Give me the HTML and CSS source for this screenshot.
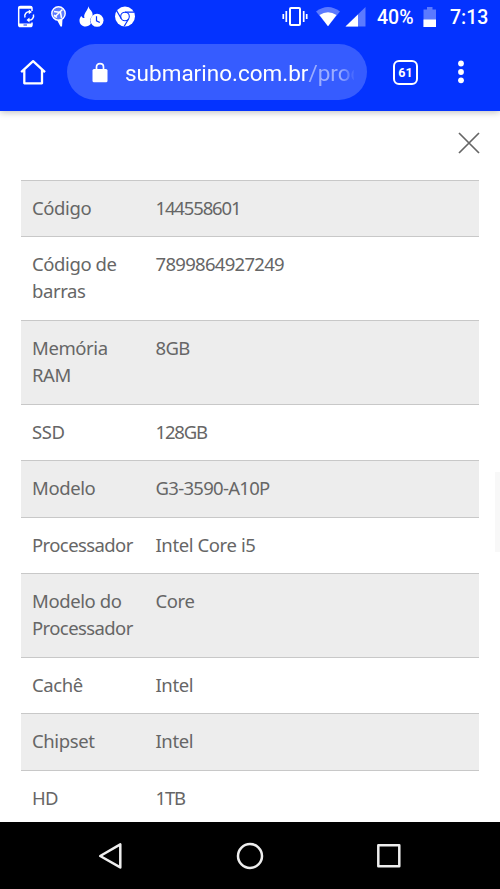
FILE: index.html
```html
<!DOCTYPE html>
<html lang="pt-BR">
<head>
<meta charset="utf-8">
<title>Submarino</title>
<link rel="stylesheet" href="styles.css">
</head>
<body>
<div class="phone">
  <header class="chrome">
    <div class="status">
      <svg class="status-left" width="140" height="36" viewBox="0 0 140 36" fill="none" stroke="#fff">
        <path d="M32 11V8.300Q32 6.500 30.200 6.500H20.500Q18.700 6.500 18.700 8.300V24.700Q18.700 26.500 20.500 26.500H30.200Q32 26.500 32 24.700V22.500" stroke-width="1.500"/>
        <path d="M18.700 7.500H32M18.700 24.800H32" stroke-width="2.400"/>
        <path d="M23.500 25H27" stroke="#0433ff" stroke-width="1"/>
        <path d="M25 17.500A4.300 4.300 0 0 1 30 11.800M33.400 14.500A4.300 4.300 0 0 1 28.500 20" stroke-width="1.500"/>
        <path d="M28.800 9.500L32 12L28.800 14.300ZM29.500 17.500L26.500 20L29.500 22.500Z" fill="#fff" stroke="none"/>
        <path d="M57 20L60.500 26.500L62 26.500L62.500 19.500Z" fill="#fff" stroke="none"/>
        <circle cx="58.500" cy="13.400" r="6.700" fill="#fff" fill-opacity=".35" stroke-width="1.400"/>
        <path d="M62.500 9.500L54.500 17.300M54 11.500L60.500 12.500L61.500 18M54 15L57 17.500" stroke-width="1.500"/>
        <path d="M88.500 6.300C89 10 93.500 11 92.500 16C90.300 17.500 89.700 20 90.800 23.800C89.500 25.700 87.500 26.500 85.500 26.500C82 26.500 79.500 24 79.500 20.500C79.500 18.500 80.300 17 81.500 16C82 17.800 83.500 18.300 84.500 18C83 14 87.500 11 88.500 6.300Z" fill="#fff" stroke="none"/>
        <circle cx="97" cy="20.300" r="6.500" fill="#fff" stroke="none"/>
        <path d="M96.500 16.300V20.800L99.800 22.500" stroke="#0433ff" stroke-width="1.200"/>
        <circle cx="125" cy="16.500" r="10" fill="#fff" stroke="none"/>
        <circle cx="125" cy="16.500" r="4.300" stroke="#0433ff" stroke-width="1.100"/>
        <path d="M125 12.200H134M121.300 18.700L116.700 10.800M128.700 18.700L124.200 26.300" stroke="#0433ff" stroke-width="1.200"/>
      </svg>
      <svg class="status-right" width="94" height="36" viewBox="278 0 94 36" fill="none" stroke="#fff">
        <rect x="290" y="8" width="10" height="17" rx="1" stroke-width="2"/>
        <path d="M286.300 11V22M303.700 11V22M283.300 14V19M306.700 14V19" stroke-width="1.700"/>
        <path d="M328 26.300L316 11.500Q328 2.500 340 11.500Z" fill="#fff" fill-opacity=".35" stroke="none"/>
        <path d="M328 26.300L319.500 15Q328 9.500 336.500 15Z" fill="#fff" stroke="none"/>
        <path d="M345.500 26.500L365.500 7V26.500Z" fill="#fff" fill-opacity=".35" stroke="none"/>
        <path d="M345.500 26.500L358 14.500V26.500Z" fill="#fff" stroke="none"/>
      </svg>
      <span class="percent">40%</span>
      <svg class="battery" width="14" height="22" viewBox="0 0 14 22">
        <path d="M.5 3.500H4V1H9.500V3.500H13V21H.5Z" fill="#fff" fill-opacity=".35"/>
        <path d="M.5 13.500H13V21H.5Z" fill="#fff"/>
      </svg>
      <span class="clock">7:13</span>
    </div>
    <div class="toolbar">
      <svg class="home" width="28" height="28" viewBox="0 0 28 28" fill="none" stroke="#fff" stroke-width="2.300" stroke-linejoin="round">
        <path d="M2.200 14.200L14.100 3.100L26 14.200M5.300 12V25.300H23V12"/>
      </svg>
      <div class="address">
        <svg class="lock" width="16" height="21" viewBox="0 0 16 21">
          <path d="M4.500 8V5Q4.500 1.700 8 1.700T11.500 5V8" fill="none" stroke="#fff" stroke-width="1.700"/>
          <rect x=".5" y="7" width="15" height="13.300" rx="1.500" fill="#fff"/>
        </svg>
        <span class="url">submarino.com.br<span class="path">/prod</span></span>
      </div>
      <span class="tabs">61</span>
      <svg class="more" width="8" height="26" viewBox="0 0 8 26" fill="#fff">
        <circle cx="4" cy="4.500" r="2.900"/><circle cx="4" cy="13" r="2.900"/><circle cx="4" cy="21.300" r="2.900"/>
      </svg>
    </div>
  </header>
  <main class="page">
    <div class="closebar">
      <svg width="24" height="24" viewBox="0 0 24 24" stroke="#666" stroke-width="1.700"><path d="M2 2L22 22M22 2L2 22"/></svg>
    </div>
    <dl class="specs">
      <div class="row"><dt>Código</dt><dd class="code">144558601</dd></div>
      <div class="row tall"><dt>Código de<br>barras</dt><dd>7899864927249</dd></div>
      <div class="row tall"><dt>Memória<br>RAM</dt><dd>8GB</dd></div>
      <div class="row"><dt>SSD</dt><dd class="code">128GB</dd></div>
      <div class="row"><dt>Modelo</dt><dd>G3-3590-A10P</dd></div>
      <div class="row"><dt class="long">Processador</dt><dd class="words">Intel Core i5</dd></div>
      <div class="row tall"><dt>Modelo do<br><span class="long">Processador</span></dt><dd class="words">Core</dd></div>
      <div class="row"><dt>Cachê</dt><dd class="words">Intel</dd></div>
      <div class="row"><dt>Chipset</dt><dd class="words">Intel</dd></div>
      <div class="row"><dt class="long">HD</dt><dd class="code">1TB</dd></div>
    </dl>
    <div class="side-tab"></div>
  </main>
  <nav class="navbar">
    <svg width="28" height="28" viewBox="0 0 28 28"><path d="M3.200 14L23.300 2.400V25.400Z"/></svg>
    <svg width="28" height="28" viewBox="0 0 28 28"><circle cx="14" cy="14" r="12"/></svg>
    <svg width="28" height="28" viewBox="0 0 28 28"><rect x="3.300" y="3.300" width="21" height="21"/></svg>
  </nav>
</div>
</body>
</html>
```

FILE: styles.css
```css
* { box-sizing: border-box; }
body { margin: 0; background: #fff; }
svg { display: block; flex: none; }

.phone {
  width: 500px;
  height: 889px;
  display: flex;
  flex-direction: column;
  overflow: hidden;
  font-family: Roboto, sans-serif;
}

.chrome {
  position: relative;
  z-index: 1;
  flex: none;
  height: 111px;
  background: #0433ff;
  color: #fff;
  box-shadow: 0 1px 7px rgba(0, 0, 0, .28);
}
.status { display: flex; align-items: center; height: 36px; }
.status-right { margin-left: 138px; }
.percent {
  width: 45px;
  margin-left: 5px;
  font-size: 19.500px;
  font-weight: 500;
  line-height: 36px;
  white-space: nowrap;
}
.battery { margin-top: -3px; margin-left: 1px; }
.clock {
  margin-left: 13px;
  font-size: 19.500px;
  font-weight: 500;
  line-height: 36px;
}

.toolbar { display: flex; align-items: center; height: 72px; }
.home { margin-left: 19px; }
.address {
  display: flex;
  align-items: center;
  width: 300px;
  height: 56px;
  margin-left: 20px;
  padding-left: 25px;
  border-radius: 28px;
  background: #365cff;
}
.url {
  width: 229px;
  margin-left: 17px;
  padding-top: 1px;
  overflow: hidden;
  font-size: 22.500px;
  line-height: 32px;
  white-space: nowrap;
  -webkit-mask-image: linear-gradient(to right, #000 215px, transparent 231px);
  mask-image: linear-gradient(to right, #000 215px, transparent 231px);
}
.path { color: #9badff; }
.tabs {
  width: 25px;
  height: 25px;
  margin-left: 26px;
  border: 2.500px solid #fff;
  border-radius: 6px;
  font-size: 12.500px;
  font-weight: 700;
  line-height: 21px;
  text-align: center;
}
.more { margin-left: 39px; }

.page { position: relative; flex: 1; min-height: 0; overflow: hidden; background: #fff; }
.closebar {
  display: flex;
  justify-content: flex-end;
  height: 68.500px;
  padding: 19.500px 19px 0 0;
}
.specs {
  margin: 0 21px;
  color: #666;
  font: 18.500px/27.300px "Noto Sans", sans-serif;
}
.row {
  display: grid;
  grid-template-columns: 123.500px 1fr;
  height: 56.500px;
  padding: 13px 11px 0;
  border-top: 1px solid #c8c8c8;
}
.row.tall { height: 83.800px; }
.row:nth-child(odd) { background: #ededed; }
dt, dd { margin: 0; letter-spacing: -.4px; white-space: nowrap; }
dd { letter-spacing: -.7px; }
.long { letter-spacing: -.600px; }
.code { letter-spacing: -1.150px; }
.words { letter-spacing: -.4px; }
.side-tab {
  position: absolute;
  right: 0;
  top: 361px;
  width: 5px;
  height: 80px;
  background: #f8f8f8;
}

.navbar {
  display: flex;
  flex: none;
  justify-content: center;
  align-items: center;
  gap: 111px;
  height: 67px;
  background: #000;
}
.navbar svg { fill: none; stroke: #eee; stroke-width: 2.500; stroke-linejoin: round; }
```
